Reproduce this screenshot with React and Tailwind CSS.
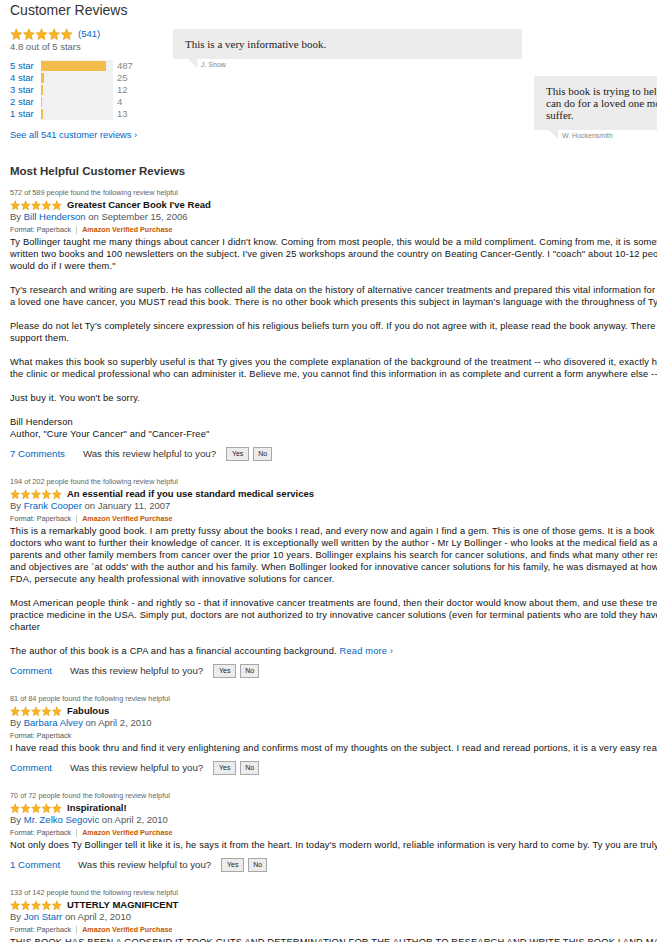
import React from "react";

const STAR = "12,1.6 14.9,8.5 22.3,9.1 16.7,14 18.4,21.4 12,17.5 5.6,21.4 7.3,14 1.7,9.1 9.1,8.5";

const Stars = ({ w, h }) => (
  <svg width={w} height={h} viewBox="0 0 120 24" preserveAspectRatio="none" className="shrink-0">
    {[0, 1, 2, 3, 4].map((i) => (
      <polygon
        key={i}
        points={STAR}
        transform={`translate(${i * 24} 0)`}
        fill="#f9b51f"
        stroke="#e08b00"
        strokeWidth="1"
      />
    ))}
  </svg>
);

const ratings = [
  { label: "5 star", count: 487 },
  { label: "4 star", count: 25 },
  { label: "3 star", count: 12 },
  { label: "2 star", count: 4 },
  { label: "1 star", count: 13 },
];

const reviews = [
  {
    helpful: "572 of 589",
    title: "Greatest Cancer Book I've Read",
    author: "Bill Henderson",
    date: "September 15, 2006",
    verified: true,
    comments: "7 Comments",
    lines: [
      "Ty Bollinger taught me many things about cancer I didn't know. Coming from most people, this would be a mild compliment. Coming from me, it is somewhat more. I have",
      "written two books and 100 newsletters on the subject. I've given 25 workshops around the country on Beating Cancer-Gently. I \"coach\" about 10-12 people a year on what I",
      "would do if I were them.\"",
      "",
      "Ty's research and writing are superb. He has collected all the data on the history of alternative cancer treatments and prepared this vital information for you. If you or",
      "a loved one have cancer, you MUST read this book. There is no other book which presents this subject in layman's language with the throughness of Ty's book.",
      "",
      "Please do not let Ty's completely sincere expression of his religious beliefs turn you off. If you do not agree with it, please read the book anyway. There is plenty to",
      "support them.",
      "",
      "What makes this book so superbly useful is that Ty gives you the complete explanation of the background of the treatment -- who disovered it, exactly how it works, and",
      "the clinic or medical professional who can administer it. Believe me, you cannot find this information in as complete and current a form anywhere else -- not even",
      "",
      "Just buy it. You won't be sorry.",
      "",
      "Bill Henderson",
      "Author, \"Cure Your Cancer\" and \"Cancer-Free\"",
    ],
  },
  {
    helpful: "194 of 202",
    title: "An essential read if you use standard medical services",
    author: "Frank Cooper",
    date: "January 11, 2007",
    verified: true,
    comments: "Comment",
    readMore: true,
    lines: [
      "This is a remarkably good book. I am pretty fussy about the books I read, and every now and again I find a gem. This is one of those gems. It is a book for patients and",
      "doctors who want to further their knowledge of cancer. It is exceptionally well written by the author - Mr Ly Bollinger - who looks at the medical field as an outsider",
      "parents and other family members from cancer over the prior 10 years. Bollinger explains his search for cancer solutions, and finds what many other researchers",
      "and objectives are `at odds' with the author and his family. When Bollinger looked for innovative cancer solutions for his family, he was dismayed at how the",
      "FDA, persecute any health professional with innovative solutions for cancer.",
      "",
      "Most American people think - and rightly so - that if innovative cancer treatments are found, then their doctor would know about them, and use these treatments",
      "practice medicine in the USA. Simply put, doctors are not authorized to try innovative cancer solutions (even for terminal patients who are told they have",
      "charter",
      "",
      "The author of this book is a CPA and has a financial accounting background.",
    ],
  },
  {
    helpful: "81 of 84",
    title: "Fabulous",
    author: "Barbara Alvey",
    date: "April 2, 2010",
    verified: false,
    comments: "Comment",
    lines: [
      "I have read this book thru and find it very enlightening and confirms most of my thoughts on the subject. I read and reread portions, it is a very easy read and",
    ],
  },
  {
    helpful: "70 of 72",
    title: "Inspirational!",
    author: "Mr. Zelko Segovic",
    date: "April 2, 2010",
    verified: true,
    comments: "1 Comment",
    lines: [
      "Not only does Ty Bollinger tell it like it is, he says it from the heart. In today's modern world, reliable information is very hard to come by. Ty you are truly a",
    ],
  },
  {
    helpful: "133 of 142",
    title: "UTTERLY MAGNIFICENT",
    author: "Jon Starr",
    date: "April 2, 2010",
    verified: true,
    comments: "Comment",
    lines: [
      "THIS BOOK HAS BEEN A GODSEND IT TOOK GUTS AND DETERMINATION FOR THE AUTHOR TO RESEARCH AND WRITE THIS BOOK I AND MANY OTHERS",
    ],
  },
];

const Quote = ({ lines, author, className }) => (
  <div className={`shrink-0 ${className}`}>
    <div className="bg-[#ececec] px-[12px] py-[9px] font-['Liberation_Serif',serif] text-[11px] leading-[12px] text-[#222]">
      {lines.map((l) => (
        <div key={l} className="whitespace-nowrap">
          {l}
        </div>
      ))}
    </div>
    <div className="flex items-start">
      <svg className="ml-[15px] shrink-0" width="9" height="9" viewBox="0 0 9 9">
        <polygon points="0,0 9,0 9,9" fill="#ececec" />
      </svg>
      <span className="ml-[4px] mt-px whitespace-nowrap text-[7px] leading-[10px] text-[#888]">{author}</span>
    </div>
  </div>
);

const Review = ({ r, first }) => (
  <div className={first ? "mt-[9px]" : "mt-[15px]"}>
    <div className="h-[12px] whitespace-nowrap text-[7.3px] leading-[12px] text-[#666]">
      {r.helpful} people found the following review helpful
    </div>
    <div className="flex h-[12px] items-center">
      <Stars w={52} h={11} />
      <span className="ml-[5px] whitespace-nowrap text-[9.5px] font-bold text-[#111]">{r.title}</span>
    </div>
    <div className="h-[12px] whitespace-nowrap text-[9.5px] leading-[12px] text-[#555]">
      By <span className="text-[#0066c0]">{r.author}</span> on {r.date}
    </div>
    <div className="mt-px flex h-[12px] items-center whitespace-nowrap text-[7.2px] text-[#555]">
      <span>Format: Paperback</span>
      {r.verified && (
        <>
          <span className="mx-[5px] h-[8px] w-px bg-[#ccc]" />
          <span className="font-bold text-[#c45500]">Amazon Verified Purchase</span>
        </>
      )}
    </div>
    <div className="whitespace-nowrap text-[9.3px] leading-[12px] tracking-[0.17px] text-[#111]">
      {r.lines.map((l, i) =>
        l === "" ? (
          <div key={i} className="h-[12px]" />
        ) : (
          <div key={i} className="h-[12px]">
            {l}
            {r.readMore && i === r.lines.length - 1 && <span className="text-[#0066c0]"> Read more ›</span>}
          </div>
        )
      )}
    </div>
    <div className="mt-[7px] flex h-[14px] items-center whitespace-nowrap text-[9.7px]">
      <span className="text-[#0066c0]">{r.comments}</span>
      <span className="ml-[18px] text-[#333]">Was this review helpful to you?</span>
      <button className="ml-[10px] h-[14px] w-[23px] border border-[#a8a8a8] bg-[#ececec] text-[7px] leading-[12px] text-[#222]">
        Yes
      </button>
      <button className="ml-[4px] h-[14px] w-[19px] border border-[#a8a8a8] bg-[#ececec] text-[7px] leading-[12px] text-[#222]">
        No
      </button>
    </div>
  </div>
);

export default function App() {
  return (
    <div className="h-[942px] w-[657px] overflow-hidden bg-white px-[10px] font-['Liberation_Sans',Arial,sans-serif] text-[#111]">
      <div className="flex items-start">
        <div className="w-[163px] shrink-0">
          <h2 className="h-[20px] text-[14px] leading-[20px] text-[#333]">Customer Reviews</h2>
          <div className="mt-[8px] flex h-[13px] items-center">
            <Stars w={63} h={13} />
            <span className="ml-[5px] text-[9.5px] text-[#0066c0]">(541)</span>
          </div>
          <div className="h-[12px] text-[9.5px] leading-[12px] text-[#666]">4.8 out of 5 stars</div>
          <div className="mt-[7px]">
            {ratings.map((r) => (
              <div key={r.label} className="flex h-[12px] items-center text-[9.5px] leading-[12px]">
                <span className="w-[31px] text-[#0066c0]">{r.label}</span>
                <div className="h-[12px] w-[72px] bg-[#f1f1f1] py-px">
                  <div className="h-[10px] bg-[#f2bd4c]" style={{ width: `${(r.count / 541) * 72}px` }} />
                </div>
                <span className="ml-[4px] text-[#888]">{r.count}</span>
              </div>
            ))}
          </div>
          <div className="mt-[9px] h-[12px] whitespace-nowrap text-[9.3px] leading-[12px] text-[#0066c0]">
            See all 541 customer reviews ›
          </div>
        </div>
        <Quote className="mt-[29px] w-[349px]" lines={["This is a very informative book."]} author="J. Snow" />
        <Quote
          className="ml-[12px] mt-[76px] w-[220px]"
          lines={["This book is trying to help people", "can do for a loved one more than", "suffer."]}
          author="W. Hockensmith"
        />
      </div>
      <h3 className="mt-[23px] h-[14px] text-[11.5px] font-bold leading-[14px] text-[#333]">
        Most Helpful Customer Reviews
      </h3>
      {reviews.map((r, i) => (
        <Review key={r.helpful} r={r} first={i === 0} />
      ))}
    </div>
  );
}
